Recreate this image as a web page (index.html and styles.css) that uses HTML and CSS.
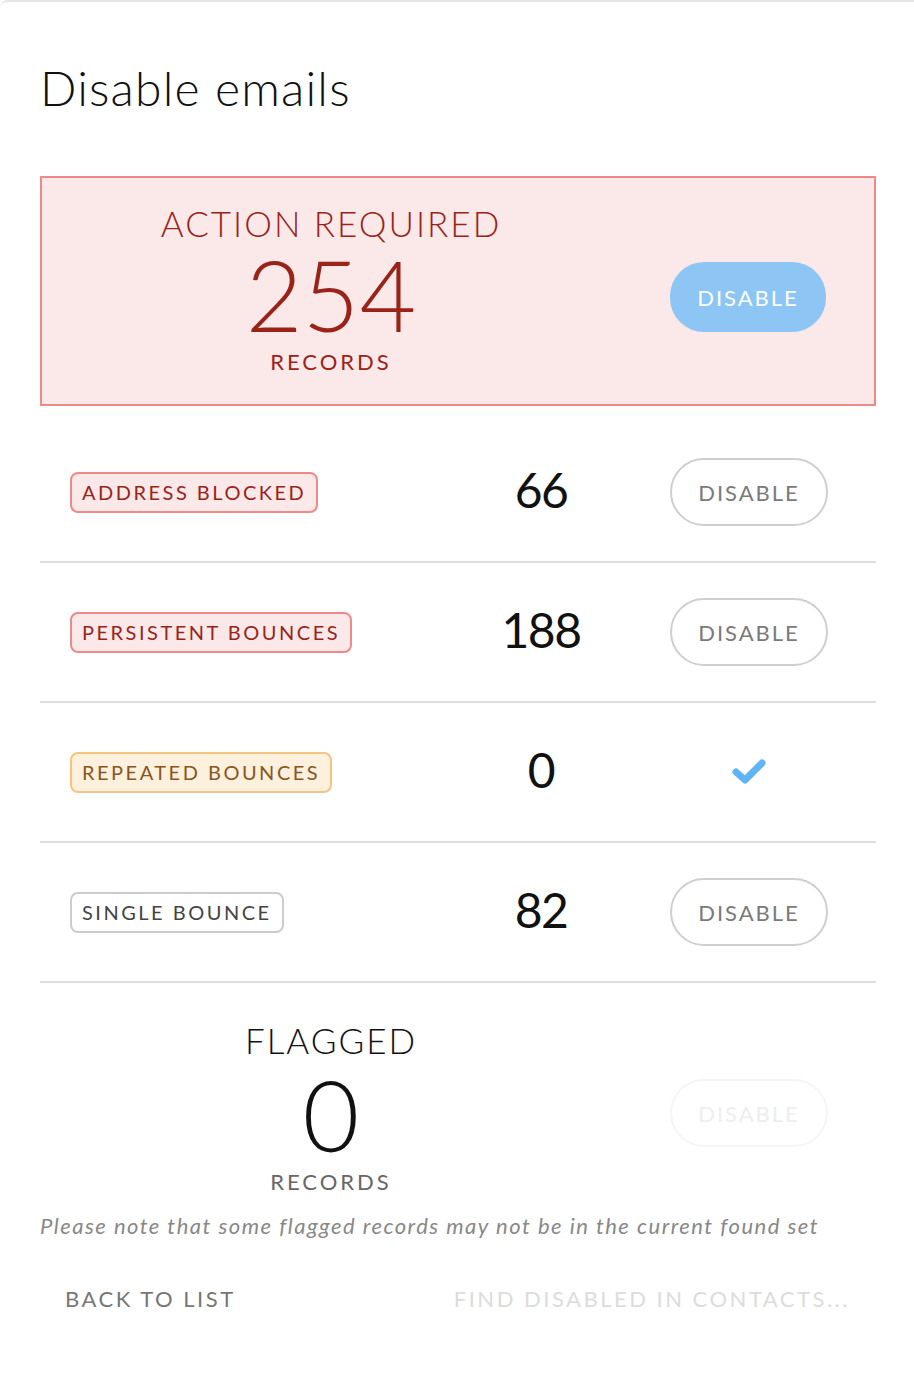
FILE: index.html
```html
<!DOCTYPE html>
<html lang="en">
<head>
  <meta charset="UTF-8">
  <meta name="viewport" content="width=device-width, initial-scale=1.0">
  <title>Disable emails</title>
  <link rel="stylesheet" href="styles.css">
</head>
<body>
  <div class="panel">
    <h1 class="title">Disable emails</h1>

    <div class="summary summary-alert">
      <div class="summary-count">
        <div class="summary-label">ACTION REQUIRED</div>
        <div class="summary-number">254</div>
        <div class="summary-unit">RECORDS</div>
      </div>
      <button class="btn btn-primary">DISABLE</button>
    </div>

    <ul class="rows">
      <li class="row">
        <div><span class="badge badge-red">ADDRESS BLOCKED</span></div>
        <span class="row-count">66</span>
        <button class="btn">DISABLE</button>
      </li>
      <li class="row">
        <div><span class="badge badge-red">PERSISTENT BOUNCES</span></div>
        <span class="row-count">188</span>
        <button class="btn">DISABLE</button>
      </li>
      <li class="row">
        <div><span class="badge badge-orange">REPEATED BOUNCES</span></div>
        <span class="row-count">0</span>
        <div class="done">
          <svg width="40" height="32" viewBox="0 0 40 32">
            <path d="M7 16 L16 24 L33 7" fill="none" stroke="#5fb4f5" stroke-width="7" stroke-linecap="round" stroke-linejoin="round"/>
          </svg>
        </div>
      </li>
      <li class="row">
        <div><span class="badge badge-gray">SINGLE BOUNCE</span></div>
        <span class="row-count">82</span>
        <button class="btn">DISABLE</button>
      </li>
    </ul>

    <div class="summary summary-flagged">
      <div class="summary-count">
        <div class="summary-label">FLAGGED</div>
        <div class="summary-number">0</div>
        <div class="summary-unit">RECORDS</div>
      </div>
      <button class="btn btn-faded" disabled>DISABLE</button>
    </div>

    <p class="note">Please note that some flagged records may not be in the current found set</p>

    <div class="footer">
      <a href="#" class="footer-link">BACK TO LIST</a>
      <a href="#" class="footer-link footer-link-off">FIND DISABLED IN CONTACTS...</a>
    </div>
  </div>
</body>
</html>
```

FILE: styles.css
```css
body{
  margin: 0;
  background: #fff;
  font-family: "Lato", "Open Sans", sans-serif;
  color: #111;
}
.panel{
  border-top: 2px solid #e6e6e6;
  border-top-left-radius: 8px;
  padding: 0 38px 40px 40px;
  min-height: 1300px;
}
.title{
  margin: 0;
  padding-top: 62px;
  height: 112px;
  box-sizing: border-box;
  font-size: 48px;
  font-weight: 300;
  line-height: 1;
  color: #111;
  letter-spacing: 1.2px;
}
.summary{
  display: grid;
  grid-template-columns: 1fr 156px;
  column-gap: 50px;
  align-items: center;
  padding: 0 48px 0 0;
  height: 230px;
  box-sizing: border-box;
  border: 2px solid transparent;
}
.summary-alert{
  margin-top: 62px;
  background: #fbe9e9;
  border-color: #f08a86;
  color: #9a2319;
}
.summary-count{
  text-align: center;
}
.summary-label{
  font-size: 35px;
  line-height: 40px;
  font-weight: 300;
  letter-spacing: 2px;
  margin-bottom: 6px;
}
.summary-number{
  font-size: 98px;
  line-height: 90px;
  font-weight: 300;
}
.summary-unit{
  font-size: 22px;
  line-height: 34px;
  letter-spacing: 3px;
  margin-top: 6px;
}
.summary-flagged{
  color: #111;
  padding-top: 22px;
}
.summary-flagged .summary-label{
  letter-spacing: 2px;
  margin-bottom: 9px;
}
.summary-flagged .summary-unit{
  color: #666;
}
.btn{
  height: 68px;
  width: 158px;
  border-radius: 34px;
  border: 2px solid #cfcfcf;
  background: #fff;
  color: #7a7a7a;
  font-family: inherit;
  font-size: 22px;
  letter-spacing: 2px;
  padding: 0;
}
.btn-primary{
  height: 70px;
  width: 156px;
  border: none;
  background: #8dc6f4;
  color: #fff;
  margin-top: 12px;
}
.btn-faded{
  border-color: #f5f5f5;
  color: #eee;
  margin-top: 8px;
}
.rows{
  list-style: none;
  margin: 17px 0 0;
  padding: 0;
}
.row{
  display: grid;
  grid-template-columns: 1fr 120px 158px;
  column-gap: 69px;
  align-items: center;
  padding: 0 48px 0 30px;
  height: 140px;
  box-sizing: border-box;
  border-bottom: 2px solid #dedede;
}
.row-count{
  text-align: center;
  font-size: 48px;
  letter-spacing: -1.5px;
  margin-bottom: 6px;
}
.badge{
  display: inline-block;
  border: 2px solid;
  border-radius: 8px;
  padding: 0 10px;
  height: 41px;
  line-height: 37px;
  box-sizing: border-box;
  font-size: 20px;
  letter-spacing: 2.5px;
}
.badge-red{
  background: #fbe9e9;
  border-color: #f08a86;
  color: #9a2319;
}
.badge-orange{
  background: #fdf0dd;
  border-color: #f5c580;
  color: #8a5520;
}
.badge-gray{
  background: #fff;
  border-color: #cccccc;
  color: #444;
}
.done{
  text-align: center;
}
.done svg{
  display: inline-block;
  vertical-align: middle;
}
.note{
  margin: 0;
  font-size: 22px;
  font-style: italic;
  letter-spacing: 1.5px;
  color: #888;
  line-height: 26px;
}
.footer{
  display: flex;
  justify-content: space-between;
  padding: 46px 26px 0 25px;
}
.footer-link{
  text-decoration: none;
  color: #777;
  font-size: 22px;
  letter-spacing: 2.5px;
}
.footer-link-off{
  color: #dcdcdc;
}
```
